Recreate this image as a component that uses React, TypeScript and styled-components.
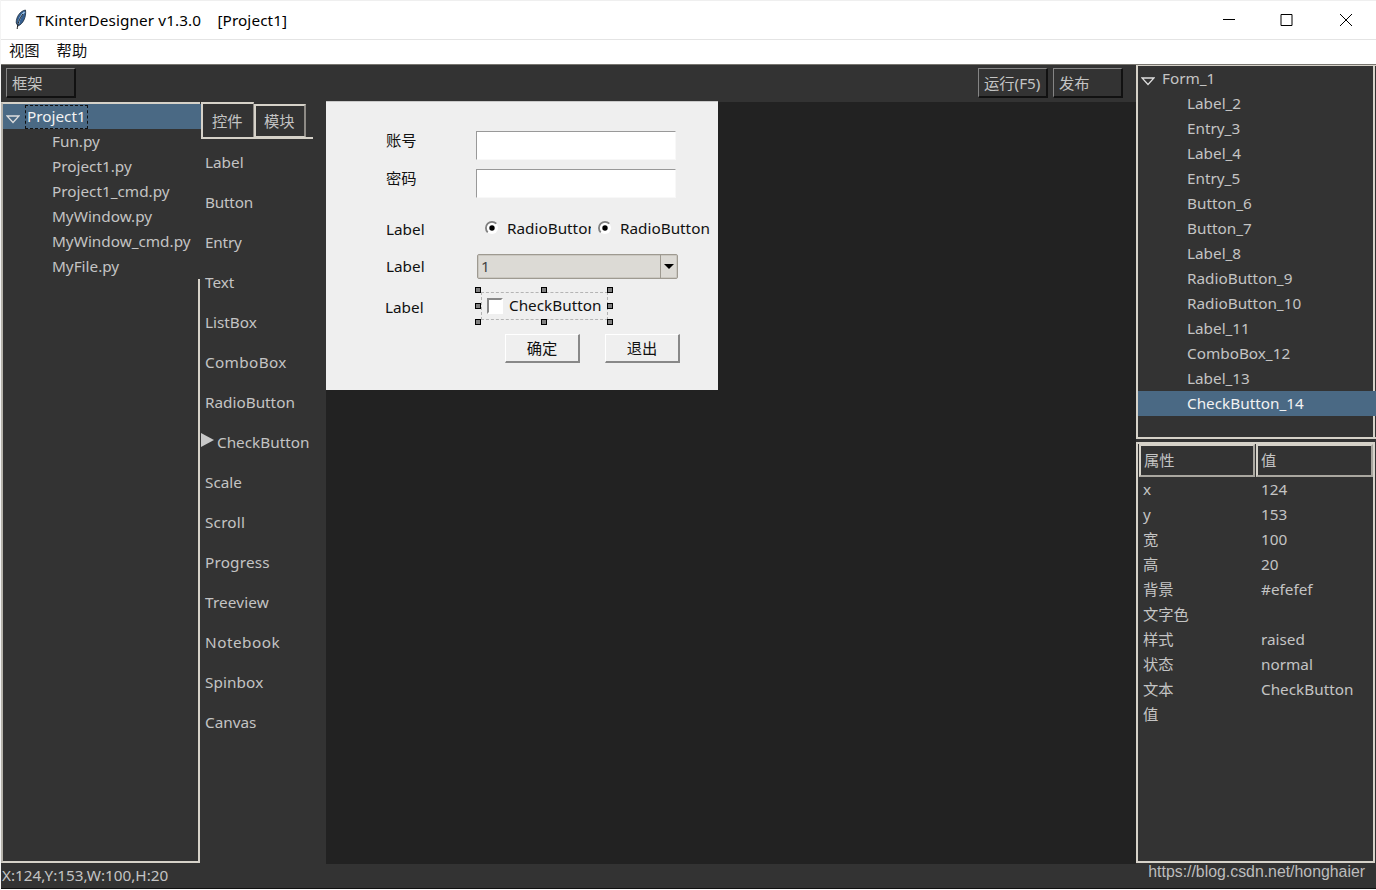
import React from "react";
import styled, { createGlobalStyle } from "styled-components";

const Global = createGlobalStyle`
  * { box-sizing: border-box; }
  body { margin: 0; background: #fff; overflow: hidden; }
  #root { font: 15.3px/25px "Noto Sans", "Noto Sans CJK SC", sans-serif; white-space: nowrap; cursor: default; }
`;

const line = "#d6d2c9";
const dim = "#8e8b86";

const Window = styled.div`
  width: 1376px;
  height: 890px;
  display: flex;
  flex-direction: column;
  background: #fff;
  border-left: 1px solid #f4f4f4;
  color: #c4c4c4;
`;

const TitleBar = styled.header`
  height: 40px;
  display: flex;
  align-items: center;
  border-top: 1px solid #efefef;
  border-bottom: 1px solid #e4e4e4;
  color: #000;
  padding: 0 1px 0 12px;
`;
const Title = styled.h1`
  margin: 0 0 0 8px;
  font-size: 15.3px;
  letter-spacing: 0.1px;
  line-height: 24px;
  font-weight: 400;
  white-space: pre;
  flex: 1;
`;
const WindowButtons = styled.div`
  display: flex;
  svg { display: block; width: 58.5px; height: 37px; }
`;

const MenuBar = styled.nav`
  height: 24px;
  display: flex;
  gap: 17px;
  padding-left: 8px;
  line-height: 20px;
  color: #111;
`;

const Body = styled.main`
  height: 800px;
  display: flex;
  background: #333;
  border-top: 1px solid #77756f;
`;
const Workspace = styled.div`
  width: 1135px;
  display: flex;
  flex-direction: column;
`;
const Toolbar = styled.div`
  height: 37px;
  display: flex;
  align-items: flex-start;
  gap: 5px;
  padding: 3px 13px 0 5px;
`;
const ToolButton = styled.button<{ $push?: boolean }>`
  width: 70px;
  height: 30px;
  margin-left: ${(p) => (p.$push ? "auto" : "0")};
  padding: 1px 0 0 5px;
  text-align: left;
  font: inherit;
  font-size: 15.3px;
  line-height: 25px;
  color: #c4c4c4;
  background: #333;
  border: 2px solid #111;
  border-top: 1px solid #858585;
  border-left: 1px solid #858585;
`;
const Panes = styled.div`
  flex: 1;
  display: flex;
`;

const ProjectPanel = styled.section`
  width: 199px;
  margin: 0 1px 1px 0;
  display: flex;
  flex-direction: column;
  border: 2px solid ${line};
  border-right: 0;
  border-left-color: #b5b2ab;
`;
const TreeRow = styled.div<{ $selected?: boolean; $indent: number; $bleed?: boolean }>`
  height: 25px;
  margin-right: ${(p) => (p.$bleed ? -1 : 0)}px;
  padding-left: ${(p) => p.$indent}px;
  display: flex;
  align-items: center;
  background: ${(p) => (p.$selected ? "#4a6984" : "transparent")};
  color: ${(p) => (p.$selected ? "#f2f2f2" : "#c4c4c4")};
  svg { width: 14px; height: 9px; margin: 6px 7px 0 0; display: block; }
`;
const Focused = styled.span`
  height: 24px;
  line-height: 20px;
  padding: 0 1px;
  margin-left: -2px;
  border: 1px dashed #111;
`;
const PanelFill = styled.div`
  flex: 1;
  border-right: 2px solid ${line};
`;

const Palette = styled.section`
  width: 125px;
`;
const Tabs = styled.div`
  width: 112px;
  height: 37px;
  display: flex;
  align-items: flex-end;
  border-bottom: 2px solid ${line};
`;
const Tab = styled.div<{ $active?: boolean }>`
  width: ${(p) => (p.$active ? 53 : 52)}px;
  height: ${(p) => (p.$active ? 35 : 33)}px;
  padding: ${(p) => (p.$active ? "5px 0 0 9px" : "3px 0 0 8px")};
  border: 2px solid ${line};
  border-bottom-width: ${(p) => (p.$active ? 0 : 1)}px;
  border-right: ${(p) => (p.$active ? 1 : 2)}px solid ${dim};
`;
const Tools = styled.div`
  padding-top: 3px;
`;
const Tool = styled.div<{ $current?: boolean; $track: number }>`
  height: 40px;
  line-height: 40px;
  padding-left: ${(p) => (p.$current ? 0 : 4)}px;
  letter-spacing: ${(p) => p.$track}px;
  display: flex;
  svg { width: 13px; height: 14px; margin: 11px 3px 0 0; display: block; }
`;

const Stage = styled.section`
  flex: 1;
  background: #222;
`;
const Form = styled.div`
  position: relative;
  width: 392px;
  height: 289px;
  margin-top: -1px;
  background: #efefef;
  border-top: 1px solid #c9c9c9;
  color: #111;
`;
const Placed = styled.div<{ $x: number; $y: number; $w?: number }>`
  position: absolute;
  left: ${(p) => p.$x}px;
  top: ${(p) => p.$y}px;
  width: ${(p) => (p.$w ? p.$w + "px" : "auto")};
  display: flex;
  overflow: hidden;
`;
const EntryBox = styled.div`
  width: 200px;
  height: 29px;
  background: #fff;
  border: 1px solid #f8f8f8;
  border-top-color: #999;
  border-left-color: #999;
`;
const Radio = styled.div`
  display: flex;
  align-items: center;
  gap: 7px;
  svg { width: 16px; height: 16px; flex: none; margin-top: -1px; }
`;
const Combo = styled.div`
  width: 201px;
  height: 25px;
  display: flex;
  border: 1px solid #9e9a91;
  border-radius: 2px;
  background: #dcdad5;
  box-shadow: inset 0 0 0 1px #cbc8c1;
`;
const ComboValue = styled.span`
  flex: 1;
  padding-left: 3px;
  line-height: 23px;
  color: #444;
`;
const ComboArrow = styled.span`
  width: 17px;
  border-left: 1px solid #9e9a91;
  display: grid;
  place-items: center;
  svg { width: 10px; height: 5px; }
`;
const Selection = styled.div`
  width: 138px;
  height: 38px;
  display: grid;
  grid-template-columns: 6px 1fr 6px 1fr 6px;
  grid-template-rows: 6px 1fr 6px 1fr 6px;
`;
const Handle = styled.i<{ $c: number; $r: number }>`
  grid-column: ${(p) => p.$c};
  grid-row: ${(p) => p.$r};
  border: 1px solid #000;
  background: #808080;
`;
const Frame = styled.div`
  grid-column: 1 / 6;
  grid-row: 1 / 6;
  margin: 5px 5px 5px 6px;
  border: 1px dashed #b4b4b4;
  display: flex;
  align-items: center;
  padding: 0 0 1px 5px;
  gap: 6px;
`;
const Check = styled.span`
  width: 16px;
  height: 16px;
  border: 2px solid #fff;
  border-top-color: #888;
  border-left-color: #888;
  background: #fff;
`;
const PushButton = styled.button`
  width: 75px;
  height: 29px;
  padding: 0;
  font: inherit;
  line-height: 25px;
  color: #111;
  background: #efefef;
  border: 2px solid #888;
  border-top: 1px solid #fff;
  border-left: 1px solid #fff;
`;

const Inspector = styled.aside`
  width: 240px;
  display: flex;
  flex-direction: column;
  gap: 3px;
  padding-bottom: 1px;
`;
const ObjectTree = styled.section`
  height: 374px;
  border: 2px solid ${line};
  border-top-width: 1px;
  border-right-width: 0;
  display: flex;
  flex-direction: column;
`;
const TreeEnd = styled.div`
  flex: 1;
  border-right: 2px solid ${line};
  margin-right: 1px;
`;
const TreeBody = styled.div`
  margin-right: 1px;
  border-right: 2px solid ${line};
`;
const Properties = styled.section`
  flex: 1;
  border: 2px solid ${line};
  margin-right: 1px;
`;
const PropHeader = styled.div`
  display: grid;
  grid-template-columns: 116px 1fr;
  gap: 1px;
  height: 33px;
  padding-left: 1px;
`;
const HeadCell = styled.div`
  border: 2px solid ${line};
  border-right-color: #aaa7a0;
  border-bottom-color: #aaa7a0;
  padding: 2px 0 0 3px;
`;
const PropRow = styled.div`
  display: grid;
  grid-template-columns: 118px 1fr;
  height: 25px;
  padding-left: 5px;
`;

const StatusBar = styled.footer`
  height: 25px;
  display: flex;
  justify-content: space-between;
  background: #333;
  border-bottom: 1px solid #111;
  padding: 0 11px 0 1px;
  line-height: 22px;
`;
const Link = styled.span`
  font: 15.85px/15px "Liberation Sans", Arial, sans-serif;
  color: #bdbdbd;
`;

const Expander = () => (
  <svg viewBox="0 0 14 9"><path d="M1 1H13L7 7.5Z" fill="none" stroke="#dedede" strokeWidth="1.3" /></svg>
);

const RadioDot = () => (
  <svg viewBox="0 0 16 16">
    <circle cx="8" cy="8" r="6" fill="#fff" />
    <path d="M3.7 12.3A6 6 0 0 1 12.3 3.7" fill="none" stroke="#808080" strokeWidth="1.8" />
    <circle cx="8" cy="8" r="2.7" fill="#000" />
  </svg>
);

const files = ["Fun.py", "Project1.py", "Project1_cmd.py", "MyWindow.py", "MyWindow_cmd.py", "MyFile.py"];
const tools: [string, number][] = [
  ["Label", 0], ["Button", -0.2], ["Entry", -0.2], ["Text", 0], ["ListBox", 0],
  ["ComboBox", 0.35], ["RadioButton", 0], ["CheckButton", 0], ["Scale", 0], ["Scroll", 0.2],
  ["Progress", 0.2], ["Treeview", 0.15], ["Notebook", 0.5], ["Spinbox", 0.1], ["Canvas", 0],
];
const objects = ["Label_2", "Entry_3", "Label_4", "Entry_5", "Button_6", "Button_7", "Label_8", "RadioButton_9", "RadioButton_10", "Label_11", "ComboBox_12", "Label_13"];
const props = [["x", "124"], ["y", "153"], ["宽", "100"], ["高", "20"], ["背景", "#efefef"], ["文字色", ""], ["样式", "raised"], ["状态", "normal"], ["文本", "CheckButton"], ["值", ""]];
const handles = [[1, 1], [3, 1], [5, 1], [1, 3], [5, 3], [1, 5], [3, 5], [5, 5]];

export default function App() {
  return (
    <Window>
      <Global />
      <TitleBar>
        <svg width="15" height="22" viewBox="0 0 15 22">
          <path d="M12.5 1C7 2 3 8 3.2 14L5 17C10 15 13.5 8 12.5 1Z" fill="#355f91" stroke="#1c2c3c" strokeWidth=".8" />
          <path d="M11.5 3C8 6 6 11 5.4 15" stroke="#9fc6e8" strokeWidth="1.6" fill="none" />
          <path d="M10 5C6 10 4.6 15 4.2 20" stroke="#222" strokeWidth="1" fill="none" />
        </svg>
        <Title>{"TKinterDesigner v1.3.0    [Project1]"}</Title>
        <WindowButtons>
          <svg viewBox="0 0 58.5 37" fill="none" stroke="#000"><path d="M23 17.5H35" /></svg>
          <svg viewBox="0 0 58.5 37" fill="none" stroke="#000"><path d="M23 12.5H34V23.5H23Z" /></svg>
          <svg viewBox="0 0 58.5 37" fill="none" stroke="#000"><path d="M23 12L35 24M35 12L23 24" /></svg>
        </WindowButtons>
      </TitleBar>
      <MenuBar><span>视图</span><span>帮助</span></MenuBar>
      <Body>
        <Workspace>
          <Toolbar>
            <ToolButton>框架</ToolButton>
            <ToolButton $push>运行(F5)</ToolButton>
            <ToolButton>发布</ToolButton>
          </Toolbar>
          <Panes>
            <ProjectPanel>
              <TreeRow $selected $bleed $indent={3}><Expander /><Focused>Project1</Focused></TreeRow>
              {files.map((f) => <TreeRow key={f} $indent={49}>{f}</TreeRow>)}
              <PanelFill />
            </ProjectPanel>
            <Palette>
              <Tabs><Tab $active>控件</Tab><Tab>模块</Tab></Tabs>
              <Tools>
                {tools.map(([name, track]) => (
                  <Tool key={name} $current={name === "CheckButton"} $track={track}>
                    {name === "CheckButton" && <svg viewBox="0 0 13 14"><path d="M0 0L13 7L0 14Z" fill="#c8c8c8" /></svg>}
                    {name}
                  </Tool>
                ))}
              </Tools>
            </Palette>
            <Stage>
              <Form>
                <Placed $x={60} $y={26}>账号</Placed>
                <Placed $x={60} $y={64}>密码</Placed>
                <Placed $x={60} $y={115}>Label</Placed>
                <Placed $x={60} $y={152}>Label</Placed>
                <Placed $x={59} $y={193}>Label</Placed>
                <Placed $x={150} $y={29}><EntryBox /></Placed>
                <Placed $x={150} $y={67}><EntryBox /></Placed>
                <Placed $x={158} $y={114} $w={107}><Radio><RadioDot />RadioButton</Radio></Placed>
                <Placed $x={271} $y={114}><Radio><RadioDot />RadioButton</Radio></Placed>
                <Placed $x={151} $y={152}>
                  <Combo>
                    <ComboValue>1</ComboValue>
                    <ComboArrow><svg viewBox="0 0 10 5"><path d="M0 0H10L5 5Z" /></svg></ComboArrow>
                  </Combo>
                </Placed>
                <Placed $x={149} $y={185}>
                  <Selection>
                    <Frame><Check /><span>CheckButton</span></Frame>
                    {handles.map(([c, r]) => <Handle key={`${c}-${r}`} $c={c} $r={r} />)}
                  </Selection>
                </Placed>
                <Placed $x={179} $y={232}><PushButton>确定</PushButton></Placed>
                <Placed $x={279} $y={232}><PushButton>退出</PushButton></Placed>
              </Form>
            </Stage>
          </Panes>
        </Workspace>
        <Inspector>
          <ObjectTree>
            <TreeBody>
              <TreeRow $indent={3}><Expander />Form_1</TreeRow>
              {objects.map((o) => <TreeRow key={o} $indent={49}>{o}</TreeRow>)}
            </TreeBody>
            <TreeRow $selected $indent={49}>CheckButton_14</TreeRow>
            <TreeEnd />
          </ObjectTree>
          <Properties>
            <PropHeader><HeadCell>属性</HeadCell><HeadCell>值</HeadCell></PropHeader>
            {props.map(([k, v]) => <PropRow key={k}><span>{k}</span><span>{v}</span></PropRow>)}
          </Properties>
        </Inspector>
      </Body>
      <StatusBar><span>X:124,Y:153,W:100,H:20</span><Link>https://blog.csdn.net/honghaier</Link></StatusBar>
    </Window>
  );
}
